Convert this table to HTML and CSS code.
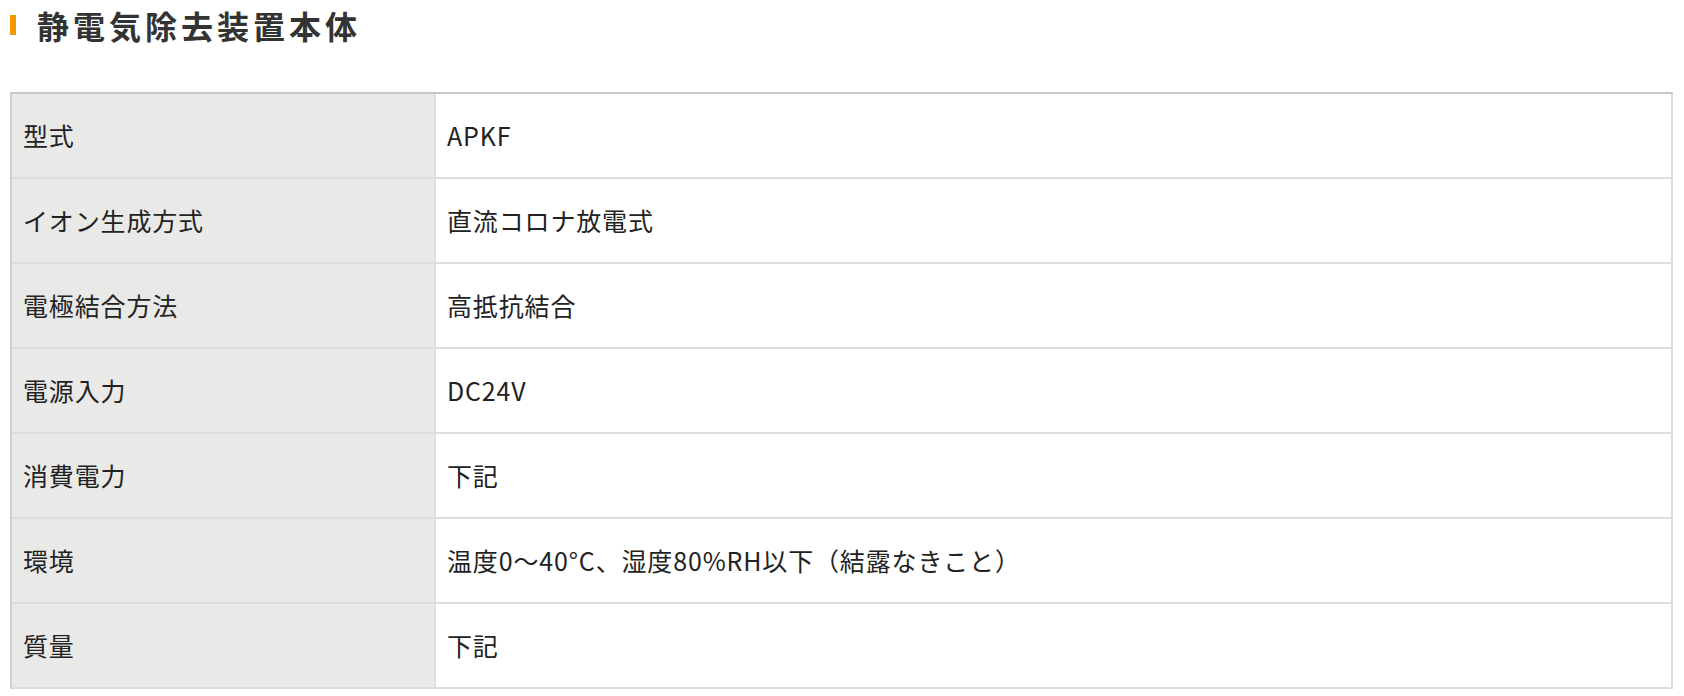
FILE: index.html
```html
<!DOCTYPE html>
<html lang="ja">
<head>
<meta charset="utf-8">
<title>静電気除去装置本体</title>
<link rel="stylesheet" href="styles.css">
</head>
<body>
<section class="spec">
  <h2 class="spec-title">静電気除去装置本体</h2>
  <table class="spec-table">
    <tbody>
      <tr><th>型式</th><td>APKF</td></tr>
      <tr><th>イオン生成方式</th><td>直流コロナ放電式</td></tr>
      <tr><th>電極結合方法</th><td>高抵抗結合</td></tr>
      <tr><th>電源入力</th><td>DC24V</td></tr>
      <tr><th>消費電力</th><td>下記</td></tr>
      <tr><th>環境</th><td>温度0〜40°C、湿度80%RH以下（結露なきこと）</td></tr>
      <tr><th>質量</th><td>下記</td></tr>
    </tbody>
  </table>
</section>
</body>
</html>
```

FILE: styles.css
```css
html, body {
  margin: 0;
  padding: 0;
  background: #ffffff;
}

body {
  font-family: "Noto Sans CJK JP", "Noto Sans", sans-serif;
  color: #222222;
}

.spec {
  padding: 0 11px 0 10px;
}

.spec-title {
  display: flex;
  align-items: center;
  gap: 21px;
  margin: 0 0 42px 0;
  height: 50px;
  font-size: 32px;
  font-weight: 700;
  letter-spacing: 4px;
  color: #333333;
  line-height: 50px;
}

.spec-title::before {
  content: "";
  display: block;
  width: 6px;
  height: 20px;
  background: #f39800;
  flex: none;
}

.spec-table {
  width: 100%;
  border-collapse: separate;
  border-spacing: 0;
  border-top: 2px solid #c8c8c8;
  border-left: 2px solid #cfcfcf;
  font-size: 25px;
  letter-spacing: 0.85px;
}

.spec-table th,
.spec-table td {
  text-align: left;
  font-weight: 400;
  padding: 24px 11px;
  line-height: 35px;
  border-right: 2px solid #dddddd;
  border-bottom: 2px solid #dddddd;
  vertical-align: middle;
}

.spec-table th {
  width: 400px;
  background: #e9e9e8;
}

.spec-table td {
  background: #ffffff;
}
```
